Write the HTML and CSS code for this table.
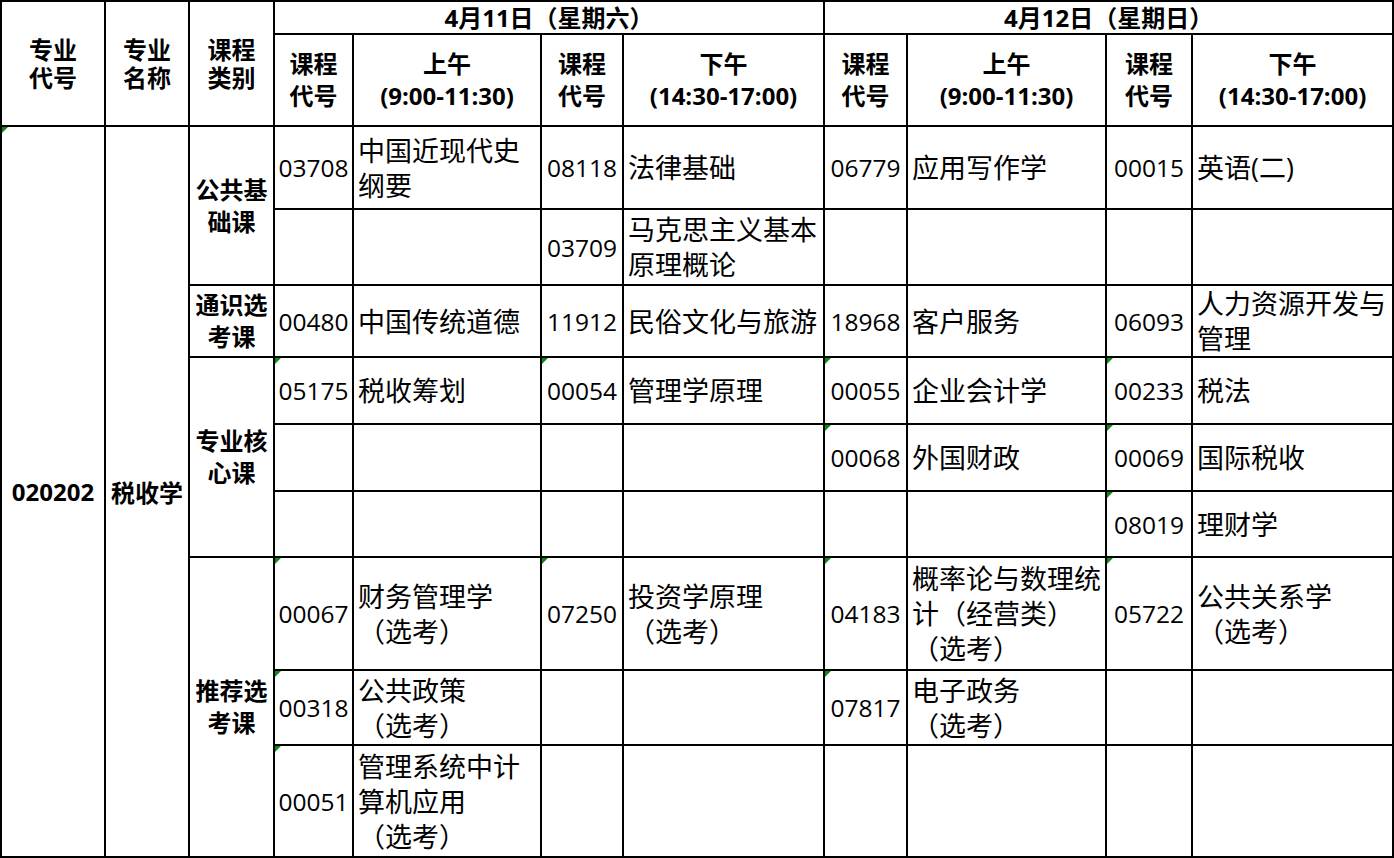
FILE: index.html
```html
<!DOCTYPE html>
<html lang="zh-CN">
<head>
<meta charset="utf-8">
<title>考试安排</title>
<link rel="stylesheet" href="styles.css">
</head>
<body>
<table class="sched">
  <colgroup>
    <col class="c1"><col class="c2"><col class="c3">
    <col class="cc"><col class="cn1"><col class="cc2"><col class="cn2">
    <col class="cc3"><col class="cn3"><col class="cc4"><col class="cn4">
  </colgroup>
  <tr class="h1">
    <th rowspan="2">专业<br>代号</th>
    <th rowspan="2">专业<br>名称</th>
    <th rowspan="2">课程<br>类别</th>
    <th colspan="4">4月11日（星期六）</th>
    <th colspan="4">4月12日（星期日）</th>
  </tr>
  <tr class="h2">
    <th>课程<br>代号</th>
    <th>上午<br>(9:00-11:30)</th>
    <th>课程<br>代号</th>
    <th>下午<br>(14:30-17:00)</th>
    <th>课程<br>代号</th>
    <th>上午<br>(9:00-11:30)</th>
    <th>课程<br>代号</th>
    <th>下午<br>(14:30-17:00)</th>
  </tr>
  <tr class="r1">
    <td rowspan="9" class="major tri">020202</td>
    <td rowspan="9" class="major">税收学</td>
    <td rowspan="2" class="cat">公共基<br>础课</td>
    <td class="code">03708</td><td class="name">中国近现代史<br>纲要</td>
    <td class="code">08118</td><td class="name">法律基础</td>
    <td class="code">06779</td><td class="name">应用写作学</td>
    <td class="code">00015</td><td class="name">英语(二)</td>
  </tr>
  <tr class="r2">
    <td class="code"></td><td class="name"></td>
    <td class="code">03709</td><td class="name">马克思主义基本<br>原理概论</td>
    <td class="code"></td><td class="name"></td>
    <td class="code"></td><td class="name"></td>
  </tr>
  <tr class="r3">
    <td class="cat">通识选<br>考课</td>
    <td class="code">00480</td><td class="name">中国传统道德</td>
    <td class="code">11912</td><td class="name">民俗文化与旅游</td>
    <td class="code">18968</td><td class="name">客户服务</td>
    <td class="code">06093</td><td class="name">人力资源开发与<br>管理</td>
  </tr>
  <tr class="r4">
    <td rowspan="3" class="cat">专业核<br>心课</td>
    <td class="code tri">05175</td><td class="name">税收筹划</td>
    <td class="code tri">00054</td><td class="name">管理学原理</td>
    <td class="code tri">00055</td><td class="name">企业会计学</td>
    <td class="code tri">00233</td><td class="name">税法</td>
  </tr>
  <tr class="r5">
    <td class="code"></td><td class="name"></td>
    <td class="code"></td><td class="name"></td>
    <td class="code tri">00068</td><td class="name">外国财政</td>
    <td class="code tri">00069</td><td class="name">国际税收</td>
  </tr>
  <tr class="r6">
    <td class="code"></td><td class="name"></td>
    <td class="code"></td><td class="name"></td>
    <td class="code"></td><td class="name"></td>
    <td class="code tri">08019</td><td class="name">理财学</td>
  </tr>
  <tr class="r7">
    <td rowspan="3" class="cat">推荐选<br>考课</td>
    <td class="code tri">00067</td><td class="name">财务管理学<br>（选考）</td>
    <td class="code tri">07250</td><td class="name">投资学原理<br>（选考）</td>
    <td class="code tri">04183</td><td class="name">概率论与数理统<br>计（经营类）<br>（选考）</td>
    <td class="code tri">05722</td><td class="name">公共关系学<br>（选考）</td>
  </tr>
  <tr class="r8">
    <td class="code tri">00318</td><td class="name">公共政策<br>（选考）</td>
    <td class="code"></td><td class="name"></td>
    <td class="code tri">07817</td><td class="name">电子政务<br>（选考）</td>
    <td class="code"></td><td class="name"></td>
  </tr>
  <tr class="r9">
    <td class="code tri">00051</td><td class="name">管理系统中计<br>算机应用<br>（选考）</td>
    <td class="code"></td><td class="name"></td>
    <td class="code"></td><td class="name"></td>
    <td class="code"></td><td class="name"></td>
  </tr>
</table>
</body>
</html>
```

FILE: styles.css
```css
html, body {
  margin: 0;
  padding: 0;
  background: #ffffff;
}

.sched {
  border-collapse: collapse;
  table-layout: fixed;
  width: 1392px;
  font-family: "Open Sans", "Noto Sans CJK SC", sans-serif;
  color: #000000;
}

.c1 { width: 104px; }
.c2 { width: 84px; }
.c3 { width: 85px; }
.cc { width: 79px; }
.cn1 { width: 188px; }
.cc2 { width: 82px; }
.cn2 { width: 201px; }
.cc3 { width: 83px; }
.cn3 { width: 199px; }
.cc4 { width: 86px; }
.cn4 { width: 201px; }

.sched th,
.sched td {
  border: 2px solid #000000;
  padding: 0;
  vertical-align: middle;
  position: relative;
}

.sched th {
  font-family: "Open Sans", "Noto Sans CJK SC", sans-serif;
  font-weight: 700;
  font-size: 24px;
  line-height: 32px;
  text-align: center;
}

.h1 { height: 33px; }
.sched .h1 th { line-height: 28px; }
.h2 { height: 92px; }
.r1 { height: 83px; }
.r2 { height: 76px; }
.r3 { height: 72px; }
.r4 { height: 67px; }
.r5 { height: 67px; }
.r6 { height: 66px; }
.r7 { height: 113px; }
.r8 { height: 75px; }
.r9 { height: 112px; }

.sched .major {
  font-weight: 700;
  font-size: 24px;
  text-align: center;
}

.sched .cat {
  font-weight: 700;
  font-size: 24px;
  line-height: 32px;
  text-align: center;
}

.sched .code {
  font-size: 24.5px;
  text-align: center;
  white-space: nowrap;
}

.sched .name {
  font-size: 27px;
  line-height: 35px;
  text-align: left;
  padding-left: 4px;
  padding-right: 0;
  white-space: nowrap;
}

.tri::before {
  content: "";
  position: absolute;
  top: 0;
  left: 0;
  width: 0;
  height: 0;
  border-top: 6px solid #0b8a16;
  border-right: 6px solid transparent;
}
```
